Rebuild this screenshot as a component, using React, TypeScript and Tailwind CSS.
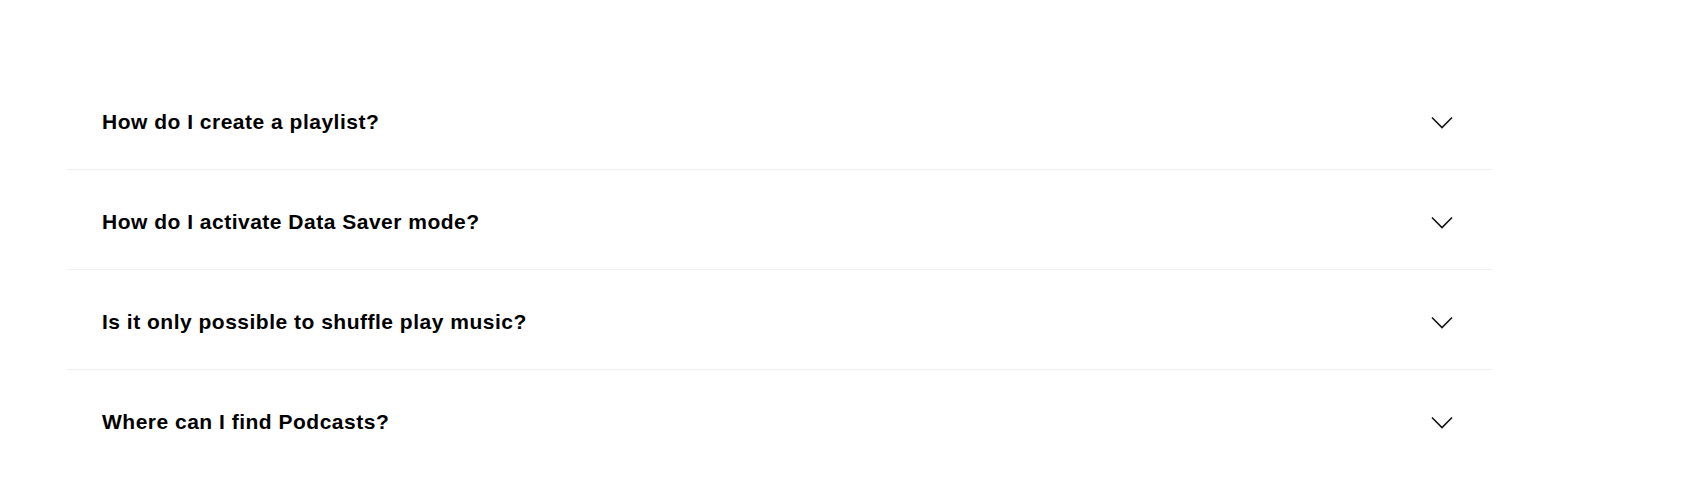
import React from "react";

const items = [
  "How do I create a playlist?",
  "How do I activate Data Saver mode?",
  "Is it only possible to shuffle play music?",
  "Where can I find Podcasts?",
];

function Chevron() {
  return (
    <svg width="22" height="14" viewBox="0 0 22 14" fill="none" className="shrink-0 mt-[6px]">
      <path d="M1 1.5 L11 11.5 L21 1.5" stroke="#121212" strokeWidth="1.6" />
    </svg>
  );
}

export default function App() {
  return (
    <div className="w-[1696px] h-[503px] bg-white pt-[70px] pl-[67px]" style={{ fontFamily: '"Liberation Sans", Arial, sans-serif' }}>
      <div className="w-[1425px] flex flex-col">
        {items.map((q, i) => (
          <div
            key={q}
            className={`h-[100px] flex items-center justify-between pl-[35px] pr-[39px] ${i < items.length - 1 ? "border-b border-[#efefef]" : ""}`}
          >
            <span className="text-[21px] font-bold text-black tracking-[0.5px] pt-[4px]">{q}</span>
            <Chevron />
          </div>
        ))}
      </div>
    </div>
  );
}
